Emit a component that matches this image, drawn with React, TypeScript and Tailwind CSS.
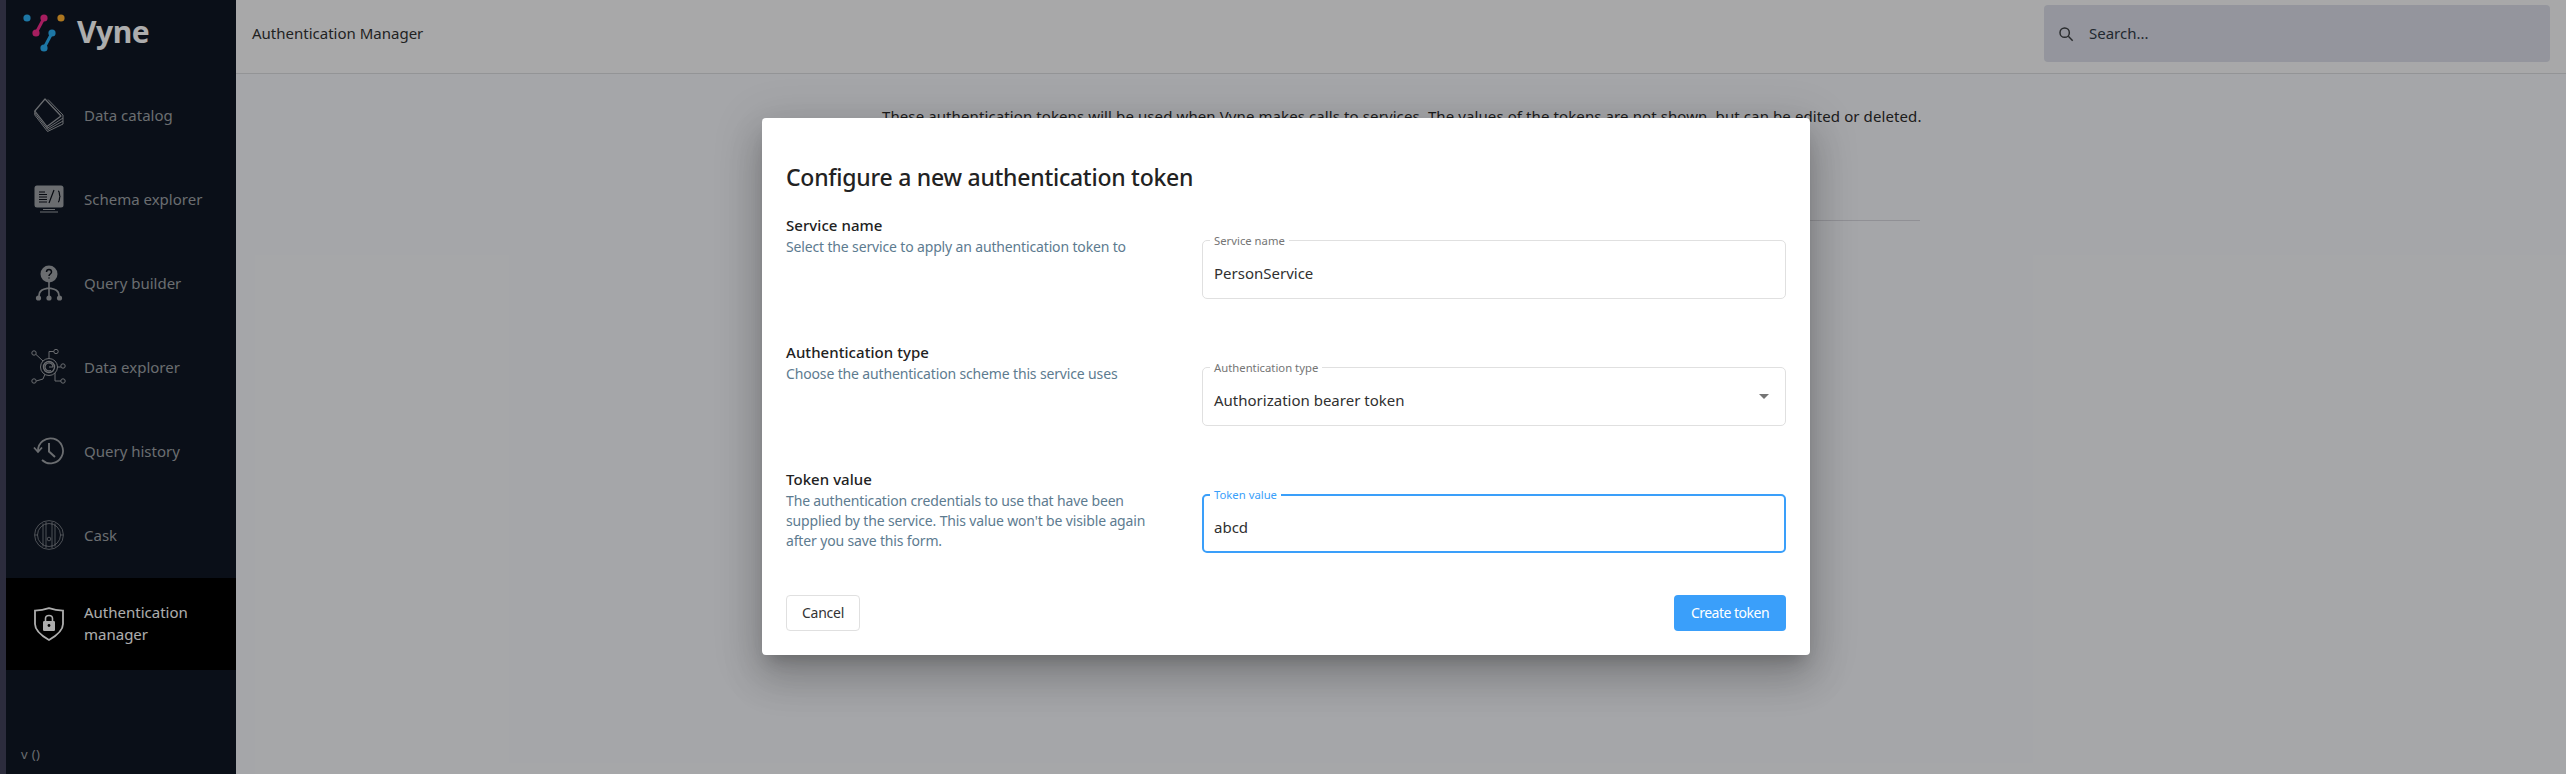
import React from "react";

const font = { fontFamily: '"Noto Sans", "Liberation Sans", sans-serif' };

function Logo() {
  return (
    <svg width="56" height="56" viewBox="0 0 56 56" className="shrink-0">
      <circle cx="6" cy="18" r="3.6" fill="#2bb0f4" />
      <circle cx="40" cy="18" r="3.6" fill="#ffb030" />
      <path d="M23 18 L15 33" stroke="#f52d8c" strokeWidth="3" />
      <circle cx="23" cy="18" r="3.6" fill="#f52d8c" />
      <circle cx="15" cy="33" r="3.6" fill="#f52d8c" />
      <path d="M31 33 L23 48" stroke="#2bb0f4" strokeWidth="3" />
      <circle cx="31" cy="33" r="3.6" fill="#2bb0f4" />
      <circle cx="23" cy="48" r="3.6" fill="#2bb0f4" />
    </svg>
  );
}

const Book = () => (
  <svg viewBox="0 0 30 35" className="w-[30px] h-[35px]" fill="none" stroke="currentColor" strokeWidth="1" strokeLinejoin="round">
    <path d="M11 1 L0.8 13 L13 28.5 L27 18 Z" strokeWidth="1.2" />
    <path d="M14 1.5 L29 17 V26 L13.5 33.5 L0.8 17 V13" />
    <path d="M13 28.5 V31 M13 30.5 L29 20 M13.3 32 L29 23 M0.8 15 L13 30.5" />
  </svg>
);
const Monitor = () => (
  <svg viewBox="0 0 30 28" className="w-[30px] h-[28px]">
    <rect x="0.5" y="0.5" width="29" height="22" rx="2.5" fill="currentColor" />
    <path d="M9 24 H21 V25 H9 Z M6 26.5 H24 V27.5 H6 Z" fill="currentColor" />
    <path d="M5 7 H11 M5 9.5 H13 M5 12 H13 M5 14.5 H13 M5 17 H13" stroke="#0b1019" strokeWidth="1.2" />
    <path d="M20 5 L15 18 M24 6 C26 6 25 10 26 11.5 C25 13 26 17 24 17" stroke="#0b1019" strokeWidth="1.2" fill="none" />
  </svg>
);
const QueryTree = () => (
  <svg viewBox="0 0 28 36" className="w-[28px] h-[36px]" fill="none" stroke="currentColor">
    <circle cx="14" cy="9" r="8.5" fill="currentColor" stroke="none" />
    <path d="M14 15 V32 M4 31 C4 24 10 24 14 23 C18 24 24 24 24 31" strokeWidth="1.6" />
    <circle cx="3.5" cy="33" r="2.6" fill="currentColor" stroke="none" />
    <circle cx="14" cy="33" r="2.6" fill="currentColor" stroke="none" />
    <circle cx="24.5" cy="33" r="2.6" fill="currentColor" stroke="none" />
    <path d="M11.5 7 C11.5 3.5 16.5 3.5 16.5 7 C16.5 9 14 9 14 11 M14 12.5 V13.5" stroke="#0b1019" strokeWidth="1.5" />
  </svg>
);
const Network = () => (
  <svg viewBox="0 0 36 36" className="w-[36px] h-[36px]" fill="none" stroke="currentColor" strokeWidth="1">
    <circle cx="18" cy="18" r="8.5" />
    <circle cx="18" cy="18" r="5.5" strokeWidth="1.4" />
    <path d="M22 18 H18 M22 18 A4 4 0 1 0 20 21.4" strokeWidth="1.2" />
    <circle cx="3" cy="4" r="2.2" /><circle cx="25" cy="2.5" r="2.2" /><circle cx="32" cy="17" r="2.2" />
    <circle cx="32" cy="32" r="2.2" /><circle cx="3" cy="32" r="2.2" />
    <path d="M5 5.5 L12 12 M22.8 2.5 H18 V9.5 M26.5 18 H29.8 M30 32 H24 V24 M5.2 32 L12 30 L14 25" />
  </svg>
);
const History = () => (
  <svg viewBox="0 0 32 28" className="w-[32px] h-[28px]" fill="none" stroke="currentColor" strokeWidth="1.8">
    <path d="M5 14 A12.5 12.5 0 1 1 9 23" />
    <path d="M1 10.5 L5 15 L9 10.5" />
    <path d="M16 6 V14.5 L22 20" strokeWidth="2" />
  </svg>
);
const CaskIcon = () => (
  <svg viewBox="0 0 30 30" className="w-[30px] h-[30px]" fill="none" stroke="currentColor" strokeWidth="0.7">
    <circle cx="15" cy="15" r="14.4" />
    <circle cx="15" cy="15" r="11.5" />
    <path d="M9 3.5 V26.5 M21 3.5 V26.5 M12 2 V28 M18 2 V28 M1 15 H3.5 M26.5 15 H29" />
    <circle cx="15" cy="19" r="1.8" />
  </svg>
);
const Shield = () => (
  <svg viewBox="0 0 30 34" className="w-[30px] h-[34px]" fill="none">
    <path d="M15 1.2 C20 3 24 3.6 29 3.6 V17 C29 24 22 29 15 33 C8 29 1 24 1 17 V3.6 C6 3.6 10 3 15 1.2 Z" stroke="currentColor" strokeWidth="1.8" />
    <rect x="9" y="14" width="12" height="10" rx="1.2" fill="currentColor" />
    <path d="M11.5 14 V11.5 C11.5 7.5 18.5 7.5 18.5 11.5 V14" stroke="currentColor" strokeWidth="1.6" />
    <circle cx="15" cy="18.5" r="1.4" fill="#000" />
  </svg>
);

function NavItem({ icon, label }: { icon: React.ReactNode; label: string }) {
  return (
    <div className="h-[84px] flex items-center text-[#9ea1a6]">
      <div className="w-[78px] flex justify-center shrink-0 pl-[7px]">{icon}</div>
      <span className="text-[15px]">{label}</span>
    </div>
  );
}

function Field({ label, value, focused, select }: { label: string; value: string; focused?: boolean; select?: boolean }) {
  return (
    <div className={`relative w-[584px] h-[59px] rounded-[5px] bg-white ${focused ? "border-2 border-[#3a9ffa]" : "border border-[#e0e0e0]"}`}>
      <span className={`absolute left-[7px] -top-[7px] bg-white px-[4px] text-[11.3px] leading-[14px] ${focused ? "text-[#3a9ffa] -mt-px -ml-px" : "text-[#757575]"}`}>{label}</span>
      <div className={`absolute left-[11px] top-[22px] text-[15px] leading-[20px] text-[#303030] ${focused ? "-mt-px -ml-px" : ""}`}>{value}</div>
      {select && <span className="absolute right-[16px] top-[26px] w-0 h-0 border-x-[5px] border-x-transparent border-t-[5px] border-t-[#757575]" />}
    </div>
  );
}

function Row({ title, desc, children }: { title: string; desc: React.ReactNode; children: React.ReactNode }) {
  return (
    <div className="h-[127px] flex justify-between">
      <div className="w-[386px]">
        <div className="text-[15px] leading-[22px] font-medium text-[#222222] tracking-[0.05px]">{title}</div>
        <div className="text-[14px] leading-[20px] text-[#5d7b90] tracking-[-0.15px] mt-px">{desc}</div>
      </div>
      <div className="pt-[26px]">{children}</div>
    </div>
  );
}

export default function App() {
  return (
    <div className="relative w-full h-[774px] flex overflow-hidden bg-[#f4f5f9]" style={font}>
      <div className="w-[6px] bg-[#41425a] shrink-0" />
      <aside className="w-[230px] shrink-0 bg-[#0f1724] flex flex-col">
        <div className="h-[73px] flex items-start pl-[15px]">
          <Logo />
          <span className="text-[30px] leading-[64px] font-bold text-white tracking-[-0.5px]">Vyne</span>
        </div>
        <NavItem icon={<Book />} label="Data catalog" />
        <NavItem icon={<Monitor />} label="Schema explorer" />
        <NavItem icon={<QueryTree />} label="Query builder" />
        <NavItem icon={<Network />} label="Data explorer" />
        <NavItem icon={<History />} label="Query history" />
        <NavItem icon={<CaskIcon />} label="Cask" />
        <div className="h-[92px] mt-px flex items-center bg-black text-white">
          <div className="w-[78px] flex justify-center shrink-0 pl-[7px]"><Shield /></div>
          <span className="text-[15px] leading-[22px] w-[120px] -mt-[2px]">Authentication manager</span>
        </div>
        <div className="mt-auto pl-[15px] pb-[10px] text-[13px] text-[#9ea1a6] tracking-[0.4px]">v ()</div>
      </aside>
      <main className="flex-1 flex flex-col min-w-0">
        <header className="h-[74px] shrink-0 bg-[#f8f8f9] border-b border-[#d9dade] flex items-center justify-between px-[16px]">
          <span className="text-[15px] text-[#333333] -mt-[7px]">Authentication Manager</span>
          <div className="w-[506px] h-[57px] -mt-[6px] rounded-[4px] bg-[#dadce7] flex items-center pl-[14px]">
            <svg viewBox="0 0 24 24" className="w-[16px] h-[16px] text-[#3d4044]" fill="none" stroke="currentColor" strokeWidth="2.2"><circle cx="10" cy="10" r="7" /><path d="M15.5 15.5 L22 22" /></svg>
            <span className="ml-[15px] text-[15px] text-[#333c48]">Search...</span>
          </div>
        </header>
        <div className="w-[1038px] mx-auto pt-[31px]">
          <p className="text-[15px] leading-[22px] text-[#2b2b2b] tracking-[0.1px] whitespace-nowrap">These authentication tokens will be used when Vyne makes calls to services. The values of the tokens are not shown, but can be edited or deleted.</p>
          <div className="mt-[93px] border-b border-[#d4d5dc]" />
        </div>
      </main>

      <div className="absolute inset-0 bg-black/32 pt-[118px] pl-[762px]">
        <div className="w-[1048px] h-[537px] bg-white rounded-[4px] px-[24px] pt-[44px] shadow-[0_11px_15px_-7px_rgba(0,0,0,0.2),0_24px_38px_3px_rgba(0,0,0,0.14),0_9px_46px_8px_rgba(0,0,0,0.12)]">
          <h1 className="text-[23px] leading-[32px] font-medium text-[#222222] tracking-[-0.25px] -mt-[1px] pb-[1px]">Configure a new authentication token</h1>
          <div className="mt-[20px]">
            <Row title="Service name" desc="Select the service to apply an authentication token to"><Field label="Service name" value="PersonService" /></Row>
            <Row title="Authentication type" desc="Choose the authentication scheme this service uses"><Field label="Authentication type" value="Authorization bearer token" select /></Row>
            <Row title="Token value" desc="The authentication credentials to use that have been supplied by the service. This value won't be visible again after you save this form."><Field label="Token value" value="abcd" focused /></Row>
          </div>
          <div className="flex justify-between">
            <button className="w-[74px] h-[36px] pb-[2px] rounded-[4px] border border-[#e0e0e0] bg-white text-[14px] text-[#333333] tracking-[-0.25px]">Cancel</button>
            <button className="w-[112px] h-[36px] pb-[2px] rounded-[4px] bg-[#3a9ffa] text-[14px] text-white tracking-[-0.5px]">Create token</button>
          </div>
        </div>
      </div>
    </div>
  );
}
